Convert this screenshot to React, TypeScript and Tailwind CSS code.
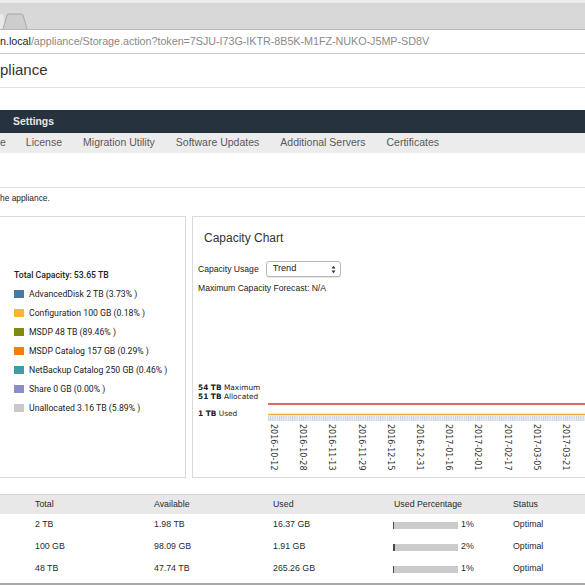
import React from "react";

const legend = [
  { color: "#4a78a6", label: "AdvancedDisk 2 TB (3.73% )" },
  { color: "#fbb631", label: "Configuration 100 GB (0.18% )" },
  { color: "#7d8c10", label: "MSDP 48 TB (89.46% )" },
  { color: "#f47d0c", label: "MSDP Catalog 157 GB (0.29% )" },
  { color: "#3b9ea5", label: "NetBackup Catalog 250 GB (0.46% )" },
  { color: "#8d8ec6", label: "Share 0 GB (0.00% )" },
  { color: "#c9c9c9", label: "Unallocated 3.16 TB (5.89% )" },
];

const dates = [
  "2016-10-12",
  "2016-10-28",
  "2016-11-13",
  "2016-11-29",
  "2016-12-15",
  "2016-12-31",
  "2017-01-16",
  "2017-02-01",
  "2017-02-17",
  "2017-03-05",
  "2017-03-21",
];

const rows = [
  { total: "2 TB", available: "1.98 TB", used: "16.37 GB", pct: 1 },
  { total: "100 GB", available: "98.09 GB", used: "1.91 GB", pct: 2 },
  { total: "48 TB", available: "47.74 TB", used: "265.26 GB", pct: 1 },
];

const tabs = ["License", "Migration Utility", "Software Updates", "Additional Servers", "Certificates"];

function BrowserChrome() {
  return (
    <div>
      <div className="relative h-[30px] border-t-[3px] border-b border-t-[#ebebeb] border-b-[#b9b9b9] bg-[#d8d8d8]">
        <svg className="absolute bottom-0 left-0" width="30" height="16" viewBox="0 0 30 16">
          <path d="M0 1 L3 1 L6 16 L0 16 Z" fill="#e9e9e9" />
          <path d="M3 16 L7 2 Q7.5 1 9 1 L21 1 Q22.5 1 23 2 L27 16" fill="#cdcdcd" stroke="#a9a9a9" strokeWidth="1" />
        </svg>
      </div>
      <div className="flex h-[24px] items-center border-b border-[#cfcfcf] bg-white text-[10.8px] tracking-[-0.05px]">
        <span className="text-[#1e1e1e]">n.local</span>
        <span className="text-[#8a8a8a]">/appliance/Storage.action?token=7SJU-I73G-IKTR-8B5K-M1FZ-NUKO-J5MP-SD8V</span>
      </div>
    </div>
  );
}

function Legend() {
  return (
    <div className="-ml-px h-[262px] w-[187px] shrink-0 border border-[#dadada] pl-[14px] pt-[53px] font-['Roboto',sans-serif] text-[8.7px] text-[#222]">
      <div className="h-[10px] font-medium leading-[10px]">Total Capacity: 53.65 TB</div>
      <div className="mt-[9px] flex flex-col gap-[9px]">
        {legend.map((item) => (
          <div key={item.label} className="flex h-[10px] items-center gap-[5px] leading-[10px]">
            <span className="h-[8px] w-[10px]" style={{ backgroundColor: item.color }} />
            <span>{item.label}</span>
          </div>
        ))}
      </div>
    </div>
  );
}

function CapacityChart() {
  return (
    <div className="ml-[6px] h-[262px] w-[420px] shrink-0 border border-[#dadada] pl-[5px] text-[#222]">
      <div className="mt-[14px] pl-[6px] text-[12px] leading-[14px] text-[#333]">Capacity Chart</div>
      <div className="mt-[16px] flex items-center text-[8.6px]">
        <span>Capacity Usage</span>
        <div className="ml-[7px] flex h-[16px] w-[75px] items-center justify-between rounded-[3px] border border-[#b8b8b8] bg-white pl-[6px] pr-[4px] text-[9.2px] shadow-[0_1px_0_#e4e4e4]">
          <span>Trend</span>
          <svg width="5" height="9" viewBox="0 0 5 9">
            <path d="M0.5 3.5 L2.5 0.8 L4.5 3.5 Z" fill="#333" />
            <path d="M0.5 5.5 L2.5 8.2 L4.5 5.5 Z" fill="#333" />
          </svg>
        </div>
      </div>
      <div className="mt-[6px] text-[8.6px] leading-[10px]">Maximum Capacity Forecast: N/A</div>

      <div className="mt-[89px] flex">
        <div className="w-[71px] shrink-0 pt-[1px] font-['DejaVu_Sans',sans-serif] text-[7.4px] leading-[9px] text-[#222]">
          <div>
            <span className="font-semibold">54 TB</span> Maximum
          </div>
          <div>
            <span className="font-semibold">51 TB</span> Allocated
          </div>
          <div className="mt-[8px]">
            <span className="font-semibold">1 TB</span> Used
          </div>
        </div>
        <div className="-ml-px min-w-0 flex-1">
          <svg width="340" height="40" viewBox="0 0 340 40" className="block">
            <defs>
              <pattern id="ticks" width="2.2" height="6" patternUnits="userSpaceOnUse">
                <rect x="0" y="0" width="1" height="6" fill="#c6d0dc" />
              </pattern>
            </defs>
            <rect x="0" y="34" width="340" height="5" fill="#eef1f5" />
            <rect x="0" y="34" width="340" height="5" fill="url(#ticks)" />
            <line x1="0" y1="22" x2="340" y2="22" stroke="#d8342b" strokeWidth="1.6" />
            <line x1="0" y1="32.5" x2="340" y2="32.5" stroke="#f0a53a" strokeWidth="1.4" />
          </svg>
          <div className="flex pl-[1px] pt-[2px]">
            {dates.map((d) => (
              <div key={d} className="w-[29.2px] shrink-0">
                <span className="block font-['DejaVu_Sans',sans-serif] text-[8px] leading-[9px] text-[#333] [writing-mode:vertical-rl]">
                  {d}
                </span>
              </div>
            ))}
          </div>
        </div>
      </div>
    </div>
  );
}

function StorageTable() {
  return (
    <div className="mt-[16px] text-[8.8px] text-[#2a2a2a]">
      <div className="grid h-[20px] grid-cols-[35px_119px_119px_121px_119px_1fr] items-center border-t border-[#d4d4d4] bg-[#e8e8e8]">
        <span />
        <span>Total</span>
        <span>Available</span>
        <span>Used</span>
        <span>Used Percentage</span>
        <span>Status</span>
      </div>
      <div className="border-b-2 border-[#a9a9a9] pb-[3px]">
        {rows.map((r) => (
          <div
            key={r.total}
            className="grid h-[22px] grid-cols-[35px_119px_119px_121px_119px_1fr] items-center"
          >
            <span />
            <span>{r.total}</span>
            <span>{r.available}</span>
            <span>{r.used}</span>
            <span className="flex items-center">
              <span className="relative -ml-px h-[7px] w-[65px] bg-[#cbcbcb]">
                <span
                  className="absolute inset-y-0 left-0 bg-[#4a4a4a]"
                  style={{ width: `${r.pct}px` }}
                />
              </span>
              <span className="ml-[3px]">{r.pct}%</span>
            </span>
            <span>Optimal</span>
          </div>
        ))}
      </div>
    </div>
  );
}

export default function App() {
  return (
    <div className="h-[585px] w-[585px] overflow-hidden bg-white font-['Liberation_Sans',Arial,sans-serif]">
      <BrowserChrome />
      <div className="flex h-[34px] items-center border-b border-[#e4e4e4] text-[15px] text-[#333]">
        pliance
      </div>
      <div className="mt-[22px] flex h-[23px] items-center bg-[#26323e] pl-[13px] text-[10.4px] font-semibold text-[#e6e6e6]">
        Settings
      </div>
      <div className="flex h-[20px] items-center bg-[#ececec] text-[10.5px] text-[#5a5a5a]">
        <span>e</span>
        {tabs.map((t, i) => (
          <span key={t} className={i === 0 ? "ml-[20px]" : "ml-[21px]"}>
            {t}
          </span>
        ))}
      </div>
      <div className="h-[35px] border-b border-[#e2e2e2]" />
      <div className="pt-[5px] text-[8.4px] leading-[10px] text-[#222]">he appliance.</div>
      <div className="mt-[13px] flex">
        <Legend />
        <CapacityChart />
      </div>
      <StorageTable />
    </div>
  );
}
